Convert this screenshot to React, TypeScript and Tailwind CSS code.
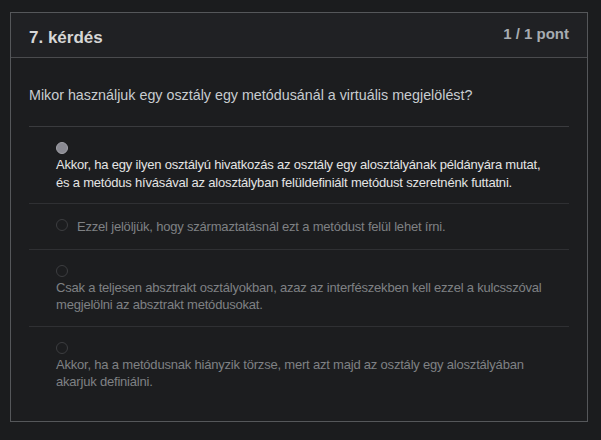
const options = [
  {
    lines: [
      'Akkor, ha egy ilyen osztályú hivatkozás az osztály egy alosztályának példányára mutat,',
      'és a metódus hívásával az alosztályban felüldefiniált metódust szeretnénk futtatni.',
    ],
    selected: true,
  },
  { lines: ['Ezzel jelöljük, hogy származtatásnál ezt a metódust felül lehet írni.'], selected: false },
  {
    lines: [
      'Csak a teljesen absztrakt osztályokban, azaz az interfészekben kell ezzel a kulcsszóval',
      'megjelölni az absztrakt metódusokat.',
    ],
    selected: false,
  },
  {
    lines: [
      'Akkor, ha a metódusnak hiányzik törzse, mert azt majd az osztály egy alosztályában',
      'akarjuk definiálni.',
    ],
    selected: false,
  },
];

const Radio = ({ checked }: { checked: boolean }) => (
  <span
    className={`block w-[12px] h-[12px] rounded-full shrink-0 ${
      checked ? 'bg-[#8a8a92] border border-[#a2a2a8]' : 'border border-[#3c3d40]'
    }`}
  />
);

export default function App() {
  return (
    <div className="min-h-screen bg-[#1b1c1e] pt-[12px] pl-[10px] font-['Liberation_Sans',Arial,sans-serif]">
      <div className="w-[578px] h-[410px] border border-[#55575a] bg-[#1c1d1f]">
        {/* header */}
        <div className="h-[45px] bg-[#202124] border-b border-[#4a4b4e] px-[18px] pt-[11px] flex justify-between items-start">
          <h2 className="mt-[3.5px] text-[17px] leading-[20px] font-bold text-[#d6d6d6]">7. kérdés</h2>
          <span className="text-[15px] leading-[20px] font-bold text-[#a7acb1]">1 / 1 pont</span>
        </div>

        {/* body */}
        <div className="px-[18px] pt-[27px]">
          <p className="text-[14.3px] leading-[20px] text-[#c8ccd0] pb-[21px] border-b border-[#3a3b3e]">
            Mikor használjuk egy osztály egy metódusánál a virtuális megjelölést?
          </p>

          <div>
            {options.map((o, i) => {
              const textCls = `text-[13px] leading-[17.5px] tracking-[-0.2px] whitespace-nowrap ${
                o.selected ? 'text-[#e4e4e4]' : 'text-[#7f8184]'
              }`;
              const border = i < options.length - 1 ? 'border-b border-[#2f3033]' : '';
              if (o.lines.length === 1) {
                return (
                  <div key={i} className={`pl-[27px] pr-[10px] pt-[14px] pb-[13px] flex items-start gap-[9px] ${border}`}>
                    <span className="mt-[1px]">
                      <Radio checked={o.selected} />
                    </span>
                    <span className={textCls}>{o.lines[0]}</span>
                  </div>
                );
              }
              return (
                <div key={i} className={`pl-[27px] pr-[10px] pt-[15px] pb-[12px] ${border}`}>
                  <div className="mb-[2px]">
                    <Radio checked={o.selected} />
                  </div>
                  <p className={textCls}>
                    {o.lines[0]}
                    <br />
                    {o.lines[1]}
                  </p>
                </div>
              );
            })}
          </div>
        </div>
      </div>
    </div>
  );
}
